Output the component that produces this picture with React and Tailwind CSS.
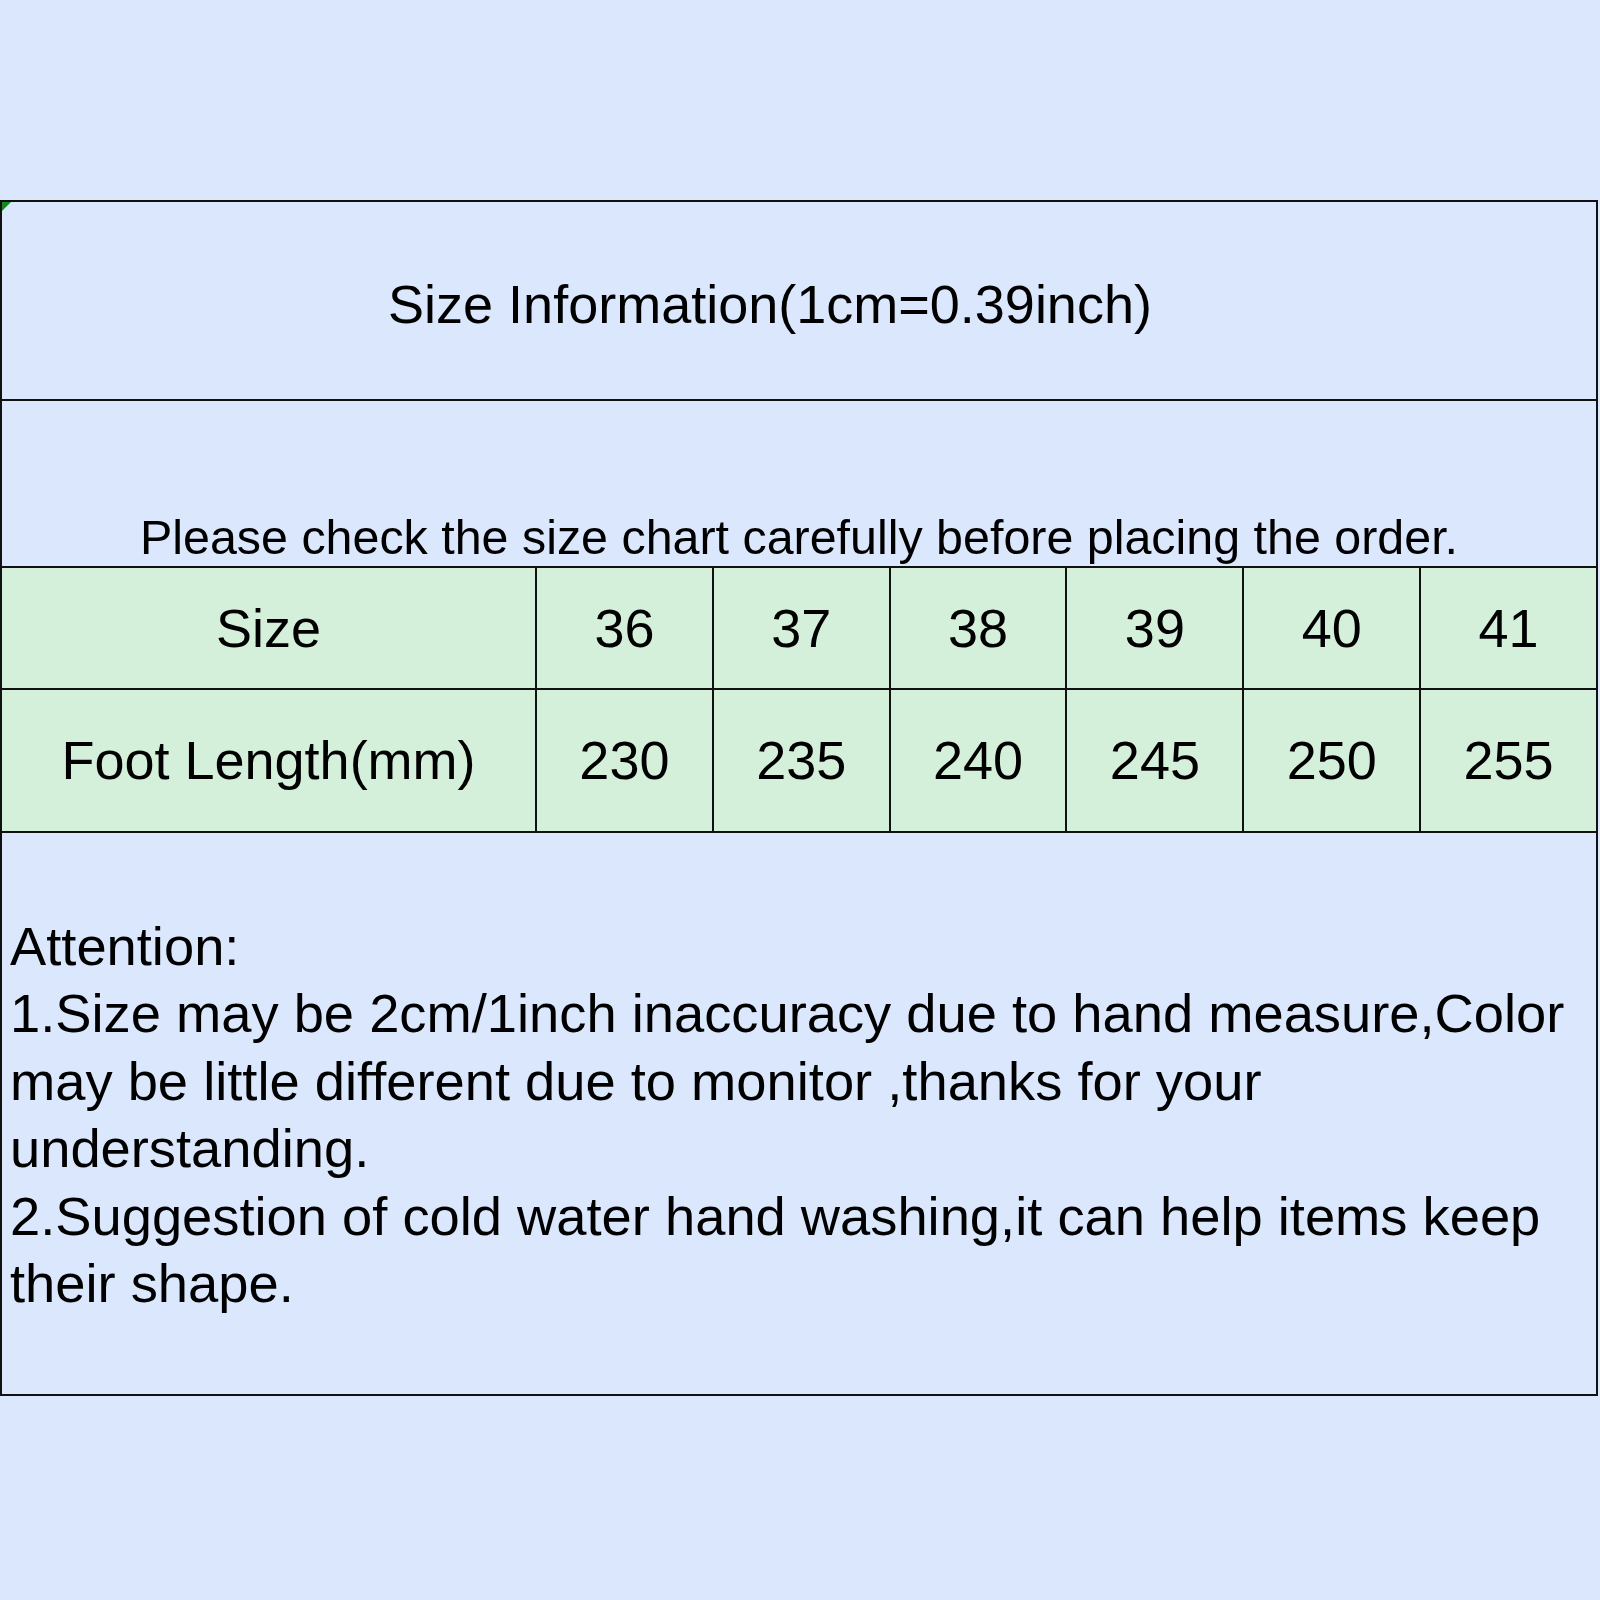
const sizes = [
  { size: '36', foot: '230' },
  { size: '37', foot: '235' },
  { size: '38', foot: '240' },
  { size: '39', foot: '245' },
  { size: '40', foot: '250' },
  { size: '41', foot: '255' },
]

const notes = [
  'Attention:',
  '1.Size may be 2cm/1inch inaccuracy due to hand measure,Color',
  'may be little different due to monitor ,thanks for your',
  'understanding.',
  '2.Suggestion of cold water hand washing,it can help items keep',
  'their shape.',
]

export default function App() {
  return (
    <div
      className="w-[1600px] h-[1600px] bg-[#dae7fc] pt-[200px] text-black overflow-hidden"
      style={{ fontFamily: '"Liberation Sans", Arial, sans-serif' }}
    >
      <div className="relative w-[1598px] border-2 border-[#111]">
        {/* excel-style corner marker */}
        <svg className="absolute left-0 top-0" width="9" height="9" viewBox="0 0 9 9">
          <polygon points="0,0 9,0 0,9" fill="#138a1a" />
        </svg>

        {/* title */}
        <div className="h-[199px] flex items-center justify-center pr-[58px] pt-[8px] border-b-2 border-[#111]">
          <span className="text-[54px] leading-[1.15]">Size Information(1cm=0.39inch)</span>
        </div>

        {/* hint */}
        <div className="h-[167px] flex items-end justify-center border-b-2 border-[#111]">
          <span className="text-[48.4px] leading-[1.15]">
            Please check the size chart carefully before placing the order.
          </span>
        </div>

        {/* size table */}
        <div className="grid grid-cols-[533px_repeat(6,1fr)] bg-[#d4f0da] text-[54px] leading-[1.15]">
          <div className="h-[122px] flex items-center justify-center border-b-2 border-[#111]">Size</div>
          {sizes.map((s) => (
            <div
              key={s.size}
              className="h-[122px] flex items-center justify-center border-b-2 border-l-2 border-[#111]"
            >
              {s.size}
            </div>
          ))}
          <div className="h-[143px] flex items-center justify-center border-b-2 border-[#111]">
            Foot Length(mm)
          </div>
          {sizes.map((s) => (
            <div
              key={s.foot}
              className="h-[143px] flex items-center justify-center border-b-2 border-l-2 border-[#111]"
            >
              {s.foot}
            </div>
          ))}
        </div>

        {/* notes */}
        <div className="h-[561px] pt-[80px] pl-[8px] text-[54.3px] leading-[67.4px]">
          {notes.map((line) => (
            <div key={line} className="whitespace-nowrap">
              {line}
            </div>
          ))}
        </div>
      </div>
    </div>
  )
}
